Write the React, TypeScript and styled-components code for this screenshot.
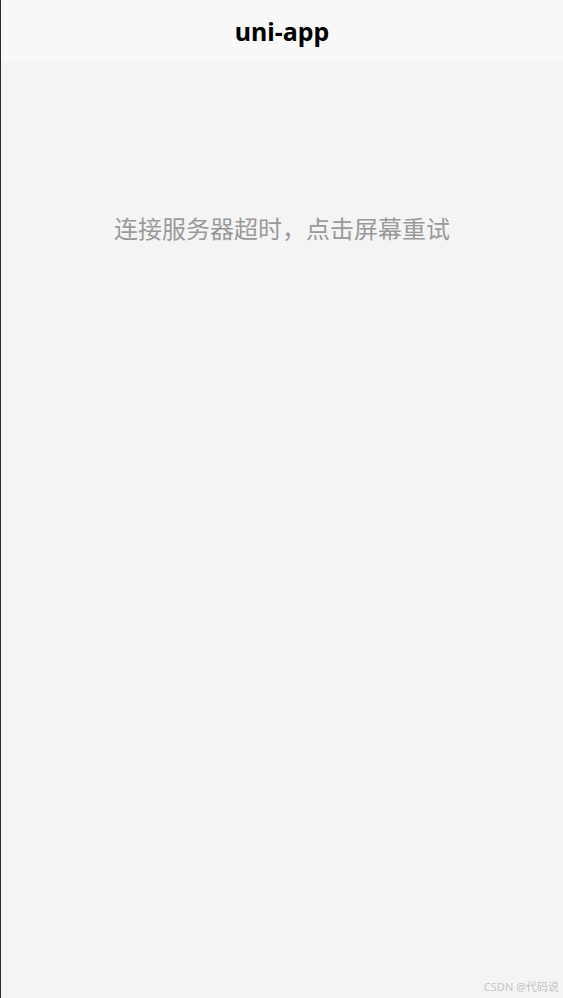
import React from "react";
import styled, { createGlobalStyle } from "styled-components";

const GlobalStyle = createGlobalStyle`
  html, body {
    margin: 0;
    padding: 0;
    background: #f4f4f4;
  }
  body {
    font-family: "Noto Sans", "Noto Sans CJK SC", sans-serif;
  }
`;

const Page = styled.div`
  display: flex;
  flex-direction: column;
  height: 998px;
  background: #f4f4f4;
  border-left: 1px solid #2b2b2b;
  box-sizing: border-box;
  position: relative;
`;

const NavBar = styled.header`
  height: 62px;
  flex-shrink: 0;
  display: flex;
  align-items: center;
  justify-content: center;
  background: #f8f8f8;
`;

const Title = styled.h1`
  margin: 0;
  font-size: 25px;
  font-weight: 700;
  color: #000;
  line-height: 1;
`;

const Body = styled.main`
  flex: 1;
  display: flex;
  justify-content: center;
  padding-top: 150px;
  cursor: pointer;
`;

const Message = styled.p`
  margin: 0;
  font-family: "Noto Sans CJK SC", sans-serif;
  font-size: 24px;
  line-height: 32px;
  color: #999999;
`;

const Watermark = styled.span`
  position: absolute;
  right: 4px;
  bottom: 4px;
  font-size: 11px;
  color: #c4c4c4;
  font-family: "Noto Sans", "Noto Sans CJK SC", sans-serif;
`;

export default function App() {
  return (
    <>
      <GlobalStyle />
      <Page>
        <NavBar>
          <Title>uni-app</Title>
        </NavBar>
        <Body>
          <Message>连接服务器超时，点击屏幕重试</Message>
        </Body>
        <Watermark>CSDN @代码说</Watermark>
      </Page>
    </>
  );
}
